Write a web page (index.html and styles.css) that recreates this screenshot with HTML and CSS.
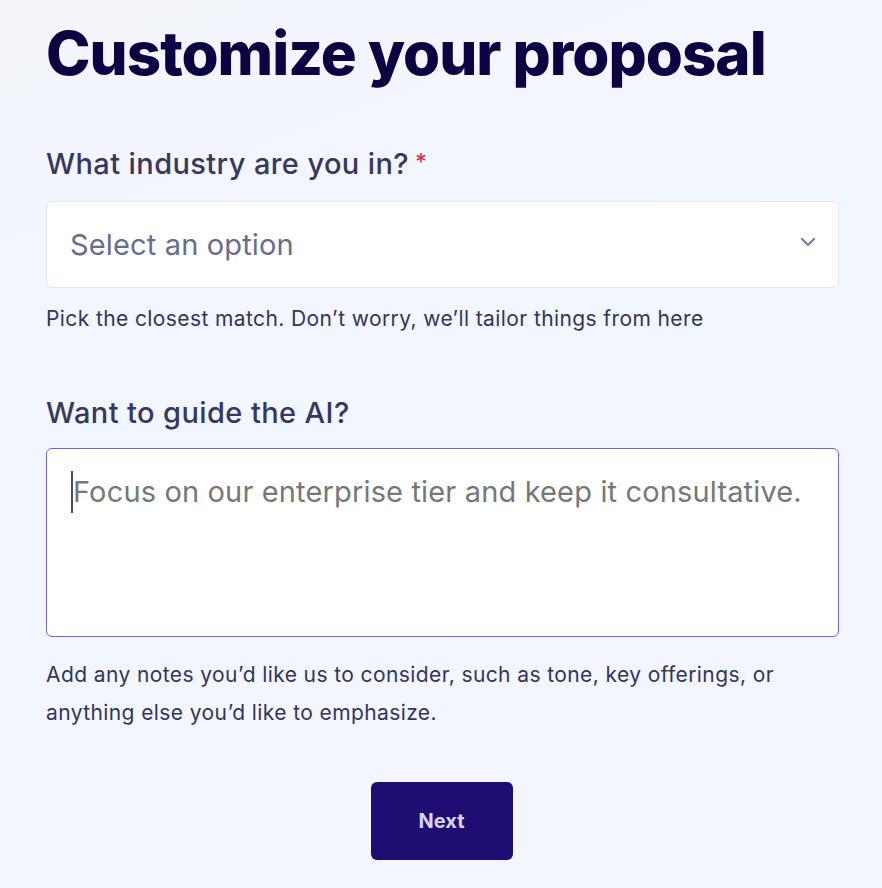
FILE: index.html
```html
<!DOCTYPE html>
<html lang="en">
<head>
<meta charset="utf-8">
<title>Customize your proposal</title>
<link rel="stylesheet" href="styles.css">
</head>
<body>
<main class="page">
  <h1 class="title">Customize your proposal</h1>

  <section class="field field-industry">
    <label class="label" for="industry">What industry are you in? <span class="req">*</span></label>
    <div class="select">
      <span class="select-placeholder">Select an option</span>
      <svg class="chevron" width="16" height="10" viewBox="0 0 16 10" aria-hidden="true">
        <path d="M2 2 L8 8 L14 2" fill="none" stroke="#7b7f99" stroke-width="2.4" stroke-linecap="round" stroke-linejoin="round"/>
      </svg>
    </div>
    <p class="help">Pick the closest match. Don’t worry, we’ll tailor things from here</p>
  </section>

  <section class="field field-guide">
    <label class="label" for="guide">Want to guide the AI?</label>
    <div class="textarea">
      <span class="caret"></span><span class="ta-placeholder">Focus on our enterprise tier and keep it consultative.</span>
    </div>
    <p class="help help-multi">Add any notes you’d like us to consider, such as tone, key offerings, or<br>anything else you’d like to emphasize.</p>
  </section>

  <div class="actions">
    <button class="btn-next" type="button">Next</button>
  </div>
</main>
</body>
</html>
```

FILE: styles.css
```css
html, body {
  margin: 0;
  padding: 0;
}
body {
  min-height: 888px;
  background: linear-gradient(160deg, #f3f5fb 0%, #f2f6fe 40%, #f3f6fd 100%);
  font-family: "Inter", "Lato", "DejaVu Sans", sans-serif;
  color: #33355e;
}
.page {
  width: 793px;
  margin-left: 46px;
  padding-top: 17px;
}
.title {
  margin: 0;
  font-size: 60px;
  line-height: 72px;
  font-weight: 800;
  color: #0d0342;
  letter-spacing: -1px;
}
.field-industry {
  margin-top: 58px;
}
.label {
  display: flex;
  align-items: flex-start;
  gap: 6px;
  font-size: 29px;
  line-height: 34px;
  font-weight: 500;
  letter-spacing: 0.4px;
  color: #363862;
}
.req {
  color: #e0314b;
  font-size: 23px;
  line-height: 30px;
}
.select {
  margin-top: 20px;
  height: 87px;
  box-sizing: border-box;
  background: #ffffff;
  border: 1px solid #dfe5f1;
  border-radius: 6px;
  display: flex;
  align-items: center;
  justify-content: space-between;
  padding: 0 22px 0 23px;
}
.select-placeholder {
  font-size: 29px;
  letter-spacing: 0.15px;
  color: #696d8c;
}
.chevron {
  display: block;
  margin-top: -6px;
}
.help {
  margin: 12px 0 0;
  font-size: 21px;
  line-height: 38px;
  letter-spacing: 0.4px;
  color: #33355e;
}
.field-guide {
  margin-top: 58px;
}
.textarea {
  margin-top: 18px;
  height: 189px;
  box-sizing: border-box;
  background: #ffffff;
  border: 1px solid #6d62ea;
  border-radius: 6px;
  padding: 22px 24px;
  display: flex;
  align-items: flex-start;
}
.caret {
  width: 2px;
  height: 42px;
  background: #4a4c6e;
  flex: none;
}
.ta-placeholder {
  font-size: 29px;
  line-height: 42px;
  letter-spacing: 0.15px;
  color: #777777;
}
.help-multi {
  margin-top: 19px;
}
.actions {
  display: flex;
  justify-content: center;
  margin-top: 50px;
  padding-right: 2px;
}
.btn-next {
  width: 142px;
  height: 78px;
  border: none;
  border-radius: 6px;
  background: #1f0d74;
  color: #d9d3f7;
  font-family: "Inter", "Lato", sans-serif;
  font-size: 20px;
  font-weight: 700;
}
```
